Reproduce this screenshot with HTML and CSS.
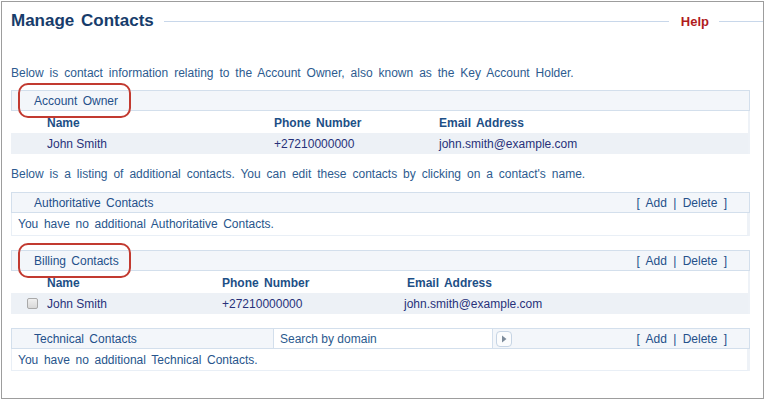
FILE: index.html
```html
<!DOCTYPE html>
<html>
<head>
<meta charset="utf-8">
<link rel="stylesheet" href="styles.css">
</head>
<body>
<div class="frame">
  <div class="title-row">
    <h1 class="title">Manage Contacts</h1>
    <span class="rule"></span>
    <a class="help">Help</a>
    <span class="rule rule-end"></span>
  </div>

  <p class="intro intro-1">Below is contact information relating to the Account Owner, also known as the Key Account Holder.</p>

  <section class="box box-owner">
    <div class="box-head">
      <span class="box-title">Account Owner</span>
      <span class="mark"></span>
    </div>
    <div class="grid grid-owner colhead">
      <span></span><span>Name</span><span>Phone Number</span><span>Email Address</span>
    </div>
    <div class="grid grid-owner datarow">
      <span></span><span>John Smith</span><span>+27210000000</span><span>john.smith@example.com</span>
    </div>
  </section>

  <p class="intro intro-2">Below is a listing of additional contacts. You can edit these contacts by clicking on a contact's name.</p>

  <section class="box box-auth">
    <div class="box-head">
      <span class="box-title">Authoritative Contacts</span>
      <span class="actions">[ Add | Delete ]</span>
    </div>
    <div class="box-body">You have no additional Authoritative Contacts.</div>
  </section>

  <section class="box box-billing">
    <div class="box-head">
      <span class="box-title">Billing Contacts</span>
      <span class="actions">[ Add | Delete ]</span>
      <span class="mark"></span>
    </div>
    <div class="grid grid-billing colhead">
      <span></span><span></span><span>Name</span><span>Phone Number</span><span>Email Address</span>
    </div>
    <div class="grid grid-billing datarow">
      <span></span><span class="check"></span><span>John Smith</span><span>+27210000000</span><span class="email-b">john.smith@example.com</span>
    </div>
  </section>

  <section class="box box-tech">
    <div class="box-head tech-head">
      <span class="box-title tech-title">Technical Contacts</span>
      <span class="search">Search by domain</span>
      <span class="go"><svg width="8" height="10" viewBox="0 0 8 10"><path d="M2 1.5 L6.5 5 L2 8.5 Z" fill="#7d8b9a"/></svg></span>
      <span class="actions">[ Add | Delete ]</span>
    </div>
    <div class="box-body">You have no additional Technical Contacts.</div>
  </section>
</div>
</body>
</html>
```

FILE: styles.css
```css
html, body {
  margin: 0;
  padding: 0;
  background: #ffffff;
}

body {
  font-family: "Liberation Sans", Arial, Helvetica, sans-serif;
  font-size: 12px;
  color: #2b5a8e;
}

.frame {
  box-sizing: border-box;
  width: 763px;
  height: 398px;
  margin: 1px 0 0 1px;
  border: 1px solid #9d9d9d;
  padding: 0 13px 0 9px;
}

.title-row {
  display: flex;
  align-items: center;
  height: 38px;
  margin-right: -13px;
}

.title {
  margin: 0;
  font-size: 17px;
  line-height: 22px;
  font-weight: bold;
  color: #173c6b;
  word-spacing: 2px;
}

.rule {
  flex: 1;
  height: 1px;
  background: #c8d7ea;
  margin: 1px 12px 0 10px;
}

.rule-end {
  flex: 0 0 44px;
  margin: 1px 0 0 10px;
}

.help {
  font-size: 13px;
  font-weight: bold;
  color: #b01c1e;
}

.intro {
  margin: 0;
  line-height: 14px;
  word-spacing: 2.6px;
  color: #2d5b8f;
}

.intro-1 { margin-top: 26px; }
.intro-2 { margin-top: 13px; }

.box-owner { margin-top: 10px; }
.box-auth { margin-top: 11px; }
.box-billing { margin-top: 14px; }
.box-tech { margin-top: 14px; }

.box-head {
  position: relative;
  box-sizing: border-box;
  height: 21px;
  display: flex;
  align-items: center;
  background: #f3f6fa;
  border: 1px solid #d3dfec;
  padding: 0 22px 0 22px;
  color: #24508a;
  word-spacing: 2px;
}

.box-title {
  flex: 1;
}

.actions {
  color: #24508a;
  word-spacing: 3px;
}

.mark {
  position: absolute;
  left: 6px;
  top: -8px;
  width: 113px;
  height: 35px;
  box-sizing: border-box;
  border: 2px solid #c23a30;
  border-radius: 10px;
}

.grid {
  display: grid;
  align-items: center;
  height: 21px;
  box-sizing: border-box;
  border-right: 2px solid #eef2f7;
}

.grid.colhead {
  height: 22px;
  padding-top: 2px;
}

.grid-owner {
  grid-template-columns: 36px 227px 165px 1fr;
}

.grid-billing {
  grid-template-columns: 16px 20px 175px 185px 1fr;
}

.colhead {
  font-weight: bold;
  color: #1d4f86;
  word-spacing: 2px;
  background: #ffffff;
}

.datarow {
  background: #edf1f6;
  color: #28317a;
}

.email-b {
  margin-left: -3px;
}

.check {
  box-sizing: border-box;
  width: 11px;
  height: 11px;
  border: 1px solid #a9a9a9;
  border-radius: 2px;
  background: linear-gradient(#f0f0f0, #d8d8d8);
}

.box-body {
  box-sizing: border-box;
  height: 23px;
  display: flex;
  align-items: center;
  padding-left: 6px;
  border: 1px solid #e9eff6;
  border-top: none;
  border-right: 3px solid #eef2f7;
  word-spacing: 2.3px;
  color: #27558c;
}

.box-tech .box-body {
  height: 22px;
}

.tech-head {
  padding-left: 0;
}

.tech-title {
  flex: 0 0 261px;
  box-sizing: border-box;
  padding-left: 22px;
}

.search {
  box-sizing: border-box;
  width: 220px;
  height: 21px;
  margin-top: -1px;
  margin-bottom: -1px;
  display: flex;
  align-items: center;
  padding-left: 6px;
  background: #ffffff;
  border: 1px solid #d3dfec;
  color: #2b5a8e;
  word-spacing: 0;
}

.go {
  box-sizing: border-box;
  width: 16px;
  height: 16px;
  margin-left: 3px;
  border: 1px solid #c6d4e4;
  border-radius: 4px;
  background: #fbfcfd;
  display: flex;
  align-items: center;
  justify-content: center;
  margin-right: auto;
}
```
